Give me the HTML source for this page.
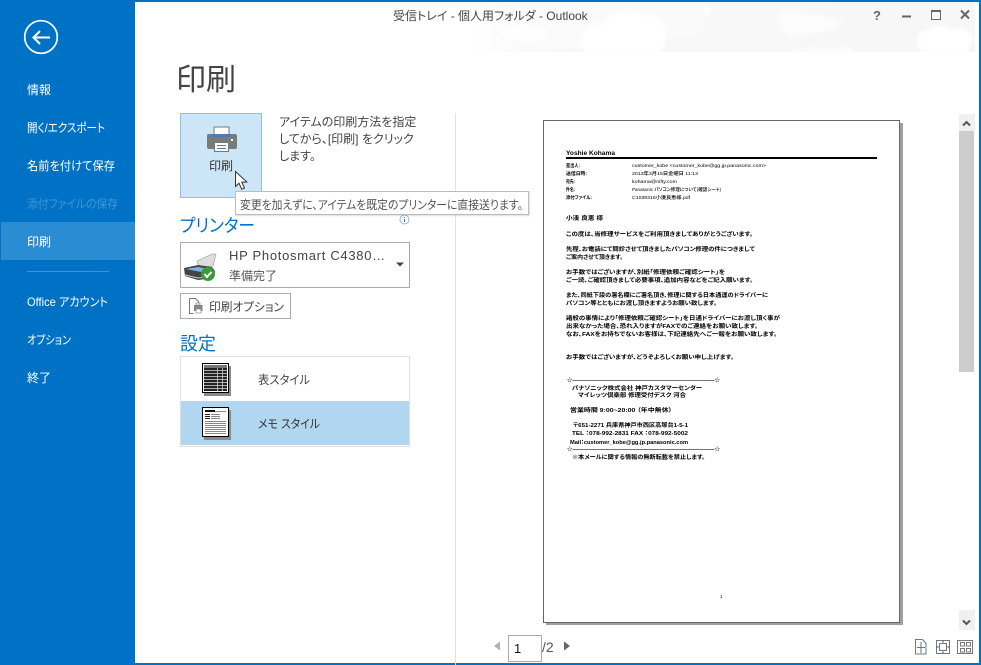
<!DOCTYPE html>
<html lang="ja"><head><meta charset="utf-8"><title>受信トレイ - 個人用フォルダ - Outlook</title>
<style>
html,body{margin:0;padding:0;width:981px;height:665px;overflow:hidden;background:#fff}
body{position:relative;font-family:"Liberation Sans","Noto Sans CJK JP",sans-serif;font-feature-settings:"palt";color:#444}
.a{position:absolute;white-space:nowrap}
svg{position:absolute;overflow:visible}
</style></head><body>

<!-- title-bar background -->
<svg style="left:0;top:0" width="981" height="665">
<defs>
<linearGradient id="g" x1="0" x2="1" y1="0" y2="0"><stop offset="0" stop-color="#f8f8f8" stop-opacity="0"/><stop offset=".2" stop-color="#f8f8f8"/><stop offset="1" stop-color="#f7f7f7"/></linearGradient>
<filter id="b"><feGaussianBlur stdDeviation="1.5"/></filter>
</defs>
<path d="M470 52 L600 48 L700 36 L712 8 L700 2 L975 2 L975 52 Z" fill="url(#g)"/>
<path d="M470 2H700L712 28L690 52H470Z" fill="url(#g)" opacity=".6"/>
<g fill="#fff" filter="url(#b)">
<path d="M585 52c-8-12-2-30 18-27 6-14 30-18 42-8 12-6 24 8 20 22 2 6-2 10-6 13z"/>
<path d="M500 34c8-10 24-10 30-8 12-2 20 4 18 12-10 6-34 6-48-4z" opacity=".7"/>
<path d="M918 46c-4-10 4-18 12-16 4-6 16-6 20 0 8-4 24 0 22 10-2 6-4 10-6 12h-42z"/>
<path d="M780 10c16 0 40 4 60 10 4 8-20 16-54 16-8-8-10-18-6-26z" opacity=".6"/>
<path d="M780 52c30-4 60-6 76-2v2z" opacity=".7"/>
</g>
</svg>

<!-- window frame -->
<div class="a" style="left:0;top:0;width:981px;height:2px;background:#0072c6"></div>
<div class="a" style="left:979px;top:0;width:2px;height:665px;background:#0072c6"></div>
<div class="a" style="left:0;top:663px;width:981px;height:2px;background:#0072c6"></div>

<!-- sidebar -->
<div class="a" style="left:0;top:0;width:135px;height:665px;background:#0072c6"></div>
<div class="a" style="left:1px;top:222px;width:134px;height:38px;background:#2a8dd4"></div>
<div class="a" style="left:27px;top:271px;width:82px;height:1px;background:#3f95d4"></div>
<svg style="left:0;top:0" width="135" height="400" font-family="Liberation Sans,Noto Sans CJK JP,sans-serif" font-size="12" fill="#fff">
<circle cx="41" cy="37" r="16.300" fill="none" stroke="#fff" stroke-width="1.700"/>
<path d="M33.500 37.500H50M40 31l-6.500 6.500L40 44" fill="none" stroke="#fff" stroke-width="2"/>
<text x="27" y="94" textLength="24" lengthAdjust="spacingAndGlyphs">情報</text>
<text x="27" y="132" textLength="78" lengthAdjust="spacingAndGlyphs">開く/エクスポート</text>
<text x="27" y="170" textLength="88" lengthAdjust="spacingAndGlyphs">名前を付けて保存</text>
<text x="27" y="208" textLength="91" lengthAdjust="spacingAndGlyphs" fill="#3f97d8">添付ファイルの保存</text>
<text x="27" y="246" textLength="24" lengthAdjust="spacingAndGlyphs">印刷</text>
<text x="27" y="306" textLength="81" lengthAdjust="spacingAndGlyphs">Office アカウント</text>
<text x="27" y="344" textLength="44" lengthAdjust="spacingAndGlyphs">オプション</text>
<text x="27" y="382" textLength="24" lengthAdjust="spacingAndGlyphs">終了</text>
</svg>

<!-- window title -->
<div class="a" style="left:393px;top:8px;font-size:12px;line-height:17px;color:#444">受信トレイ - 個人用フォルダ - Outlook</div>

<!-- caption buttons -->
<svg style="left:0;top:0" width="981" height="40">
<text x="873" y="20" font-family="Liberation Sans" font-weight="700" font-size="13" fill="#666">?</text>
<rect x="902" y="15.500" width="9" height="2" fill="#666"/>
<rect x="931.500" y="10.500" width="9" height="9" fill="none" stroke="#666"/><rect x="931" y="10" width="10" height="2" fill="#666"/>
<path d="M961 10.500l8 8M969 10.500l-8 8" stroke="#666" stroke-width="2"/>
</svg>

<!-- heading -->
<div class="a" style="left:176px;top:62px;font-size:30px;line-height:38px;color:#444">印刷</div>

<!-- print button -->
<div class="a" style="left:180px;top:113px;width:80px;height:83px;background:#cde6f7;border:1px solid #92c0e0"></div>
<svg style="left:0;top:0" width="300" height="200">
<rect x="214" y="127" width="15" height="9" fill="#fff" stroke="#777"/>
<path d="M209 134h26a2 2 0 0 1 2 2v11a2 2 0 0 1-2 2h-26a2 2 0 0 1-2-2v-11a2 2 0 0 1 2-2z" fill="#7a7a7a"/>
<rect x="211.500" y="134" width="20" height="3" fill="#4a7ebb"/>
<rect x="214.500" y="142.500" width="14" height="9" fill="#fff" stroke="#777"/>
<path d="M217 145.500h9M217 148.500h9" stroke="#4a7ebb"/>
<rect x="231" y="139" width="2" height="2" fill="#fff"/>
</svg>
<div class="a" style="left:209px;top:157px;font-size:12px;line-height:18px;color:#333">印刷</div>
<svg style="left:0;top:0" width="260" height="195">
<path d="M235.500 171.500v15l3.500-3.300 2.700 6 2.800-1.200-2.700-5.800 5 -.3z" fill="#fff" stroke="#333" stroke-width="1"/>
</svg>

<!-- description -->
<div class="a" style="left:279px;top:114px;font-size:12px;line-height:17px;color:#444">アイテムの印刷方法を指定<br>してから、[印刷] をクリック<br>します。</div>

<!-- divider -->
<div class="a" style="left:455px;top:113px;width:1px;height:552px;background:#e1e1e1"></div>

<!-- info icon + printer heading -->
<svg style="left:0;top:0" width="420" height="230">
<circle cx="404.500" cy="219.500" r="4.500" fill="#fff" stroke="#8fb8d8"/>
<path d="M404.500 217v1M404.500 219v3" stroke="#2a7fc0"/>
</svg>
<svg style="left:0;top:0" width="300" height="240" font-family="Liberation Sans,Noto Sans CJK JP,sans-serif">
<text x="180" y="232" font-size="18" fill="#0072c6" textLength="75" lengthAdjust="spacingAndGlyphs">プリンター</text>
</svg>

<!-- printer dropdown -->
<div class="a" style="left:180px;top:242px;width:228px;height:44px;border:1px solid #ababab;background:#fff"></div>
<svg style="left:0;top:0" width="420" height="300">
<path d="M197 261l15-7 4 0-3 12-14 1z" fill="#ddd" stroke="#999" stroke-width=".6"/>
<path d="M184 268l14-3 14 2 3 4-2 7-15 2-13-4z" fill="#444"/>
<path d="M186 269l12-2 11 2-8 3z" fill="#7fb2e0"/>
<path d="M185 275l13 3 15-2" stroke="#ccc" fill="none"/>
<circle cx="208" cy="274" r="7" fill="#3a9b3a"/>
<path d="M204.500 274l2.500 3 4.500-5" stroke="#fff" stroke-width="2" fill="none"/>
<path d="M396 262.500h8l-4 4z" fill="#444"/>
</svg>
<div class="a" style="left:229px;top:247px;font-size:13px;line-height:18px;color:#444;letter-spacing:.7px">HP Photosmart C4380…</div>
<div class="a" style="left:229px;top:267px;font-size:12px;line-height:18px;color:#555">準備完了</div>

<!-- print options -->
<div class="a" style="left:180px;top:293px;width:109px;height:24px;border:1px solid #ababab;background:#fff"></div>
<svg style="left:0;top:0" width="300" height="460" font-family="Liberation Sans,Noto Sans CJK JP,sans-serif" font-size="12">
<path d="M189.500 298.500h6l3 3v3M189.500 298.500v15h4" fill="none" stroke="#777"/>
<rect x="194" y="305" width="8.500" height="6" fill="#888"/><rect x="196" y="303" width="4" height="2" fill="#fff" stroke="#777" stroke-width=".6"/><rect x="196" y="309" width="5" height="4" fill="#fff" stroke="#777" stroke-width=".6"/>
<text x="209" y="311" fill="#444" textLength="75" lengthAdjust="spacingAndGlyphs">印刷オプション</text>
</svg>

<!-- settings -->
<div class="a" style="left:180px;top:331px;font-size:18px;line-height:26px;color:#0072c6">設定</div>
<div class="a" style="left:180px;top:356px;width:228px;height:89px;border:1px solid #e1e1e1;background:#fff"></div>
<div class="a" style="left:181px;top:401px;width:228px;height:44px;background:#b1d6f0"></div>
<svg style="left:0;top:0" width="340" height="450" font-family="Liberation Sans,Noto Sans CJK JP,sans-serif" font-size="12">
<rect x="204" y="366" width="27" height="30" fill="#8a8a8a"/>
<rect x="202.500" y="363.500" width="26" height="29" fill="#fff" stroke="#000"/>
<rect x="204" y="365" width="23" height="3" fill="#777"/>
<rect x="204" y="368" width="23" height="23" fill="#222"/>
<path d="M204 370.500h23M204 373.500h23M204 376.500h23M204 379.500h23M204 382.500h23M204 385.500h23M204 388.500h23M217.500 368v23M222.500 368v23" stroke="#ddd" stroke-width=".7"/>
<rect x="204" y="410" width="27" height="30" fill="#8a8a8a"/>
<rect x="202.500" y="407.500" width="26" height="29" fill="#fff" stroke="#000"/>
<rect x="205" y="410" width="10" height="2" fill="#111"/><rect x="215" y="411" width="11" height="1" fill="#888"/>
<rect x="205" y="414" width="5" height="1" fill="#222"/><rect x="205" y="416" width="5" height="1" fill="#222"/><rect x="205" y="418" width="5" height="1" fill="#222"/>
<path d="M211 414.500h9M211 416.500h9M211 418.500h9M205 421.500h21M205 423.500h21M205 425.500h21M205 427.500h21M205 429.500h21M205 431.500h21M205 433.500h21" stroke="#888"/>
<text x="258" y="384" fill="#444" textLength="52" lengthAdjust="spacingAndGlyphs">表スタイル</text>
<text x="258" y="428" fill="#333" textLength="62" lengthAdjust="spacingAndGlyphs">メモ スタイル</text>
</svg>

<!-- tooltip -->
<div class="a" style="left:235px;top:191px;width:292px;height:22px;background:#fff;border:1px solid #bcbcbc;box-shadow:1px 1px 1px rgba(0,0,0,.12)"></div>
<svg style="left:0;top:0" width="540" height="220" font-family="Liberation Sans,Noto Sans CJK JP,sans-serif" font-size="12">
<text x="240" y="209" fill="#555" textLength="283" lengthAdjust="spacingAndGlyphs">変更を加えずに、アイテムを既定のプリンターに直接送ります。</text>
</svg>

<!-- page preview -->
<div class="a" style="left:546px;top:123px;width:357px;height:502px;background:#a0a0a0"></div>
<div class="a" style="left:543px;top:120px;width:355px;height:501px;background:#fff;border:1px solid #666"></div>
<svg style="left:0;top:0" width="981" height="665" font-family="Liberation Sans,Noto Sans CJK JP,sans-serif" font-size="5.800" fill="#000">
<text x="566" y="155" font-weight="700" font-size="6.500" textLength="49" lengthAdjust="spacingAndGlyphs">Yoshie Kohama</text>
<rect x="566" y="157" width="311" height="2" fill="#000"/>
<g font-size="4.800" font-weight="700">
<text x="566" y="167" textLength="14" lengthAdjust="spacingAndGlyphs">差出人:</text>
<text x="566" y="175" textLength="21" lengthAdjust="spacingAndGlyphs">送信日時:</text>
<text x="566" y="183" textLength="9" lengthAdjust="spacingAndGlyphs">宛先:</text>
<text x="566" y="191" textLength="9" lengthAdjust="spacingAndGlyphs">件名:</text>
<text x="566" y="199" textLength="26" lengthAdjust="spacingAndGlyphs">添付ファイル:</text>
</g>
<g font-size="4.800" font-weight="500">
<text x="632" y="167" textLength="134" lengthAdjust="spacingAndGlyphs">customer_kobe &lt;customer_kobe@gg.jp.panasonic.com&gt;</text>
<text x="632" y="175" textLength="66" lengthAdjust="spacingAndGlyphs">2013年3月15日金曜日 11:13</text>
<text x="632" y="183" textLength="45" lengthAdjust="spacingAndGlyphs">kohama@nifty.com</text>
<text x="632" y="191" textLength="89" lengthAdjust="spacingAndGlyphs">Panasonic パソコン修理について(確認シート)</text>
<text x="632" y="199" textLength="58" lengthAdjust="spacingAndGlyphs">C1039316小湊良恵様.pdf</text>
</g>
<g font-weight="700">
<text x="566" y="220" textLength="37" lengthAdjust="spacingAndGlyphs">小湊 良恵 様</text>
<text x="566" y="236" textLength="187" lengthAdjust="spacingAndGlyphs">この度は、当修理サービスをご利用頂きましてありがとうございます。</text>
<text x="566" y="251" textLength="189" lengthAdjust="spacingAndGlyphs">先程、お電話にて問診させて頂きましたパソコン修理の件につきまして</text>
<text x="566" y="259" textLength="57" lengthAdjust="spacingAndGlyphs">ご案内させて頂きます。</text>
<text x="566" y="274" textLength="159" lengthAdjust="spacingAndGlyphs">お手数ではございますが、別紙「修理依頼ご確認シート」を</text>
<text x="566" y="282" textLength="187" lengthAdjust="spacingAndGlyphs">ご一読、ご確認頂きまして必要事項、追加内容などをご記入願います。</text>
<text x="566" y="297" textLength="202" lengthAdjust="spacingAndGlyphs">また、同紙下段の署名欄にご署名頂き、修理に関する日本通運のドライバーに</text>
<text x="566" y="305" textLength="151" lengthAdjust="spacingAndGlyphs">パソコン等とともにお渡し頂きますようお願い致します。</text>
<text x="566" y="320" textLength="214" lengthAdjust="spacingAndGlyphs">諸般の事情により「修理依頼ご確認シート」を日通ドライバーにお渡し頂く事が</text>
<text x="566" y="328" textLength="192" lengthAdjust="spacingAndGlyphs">出来なかった場合、恐れ入りますがFAXでのご連絡をお願い致します。</text>
<text x="566" y="336" textLength="211" lengthAdjust="spacingAndGlyphs">なお、FAXをお持ちでないお客様は、下記連絡先へご一報をお願い致します。</text>
<text x="566" y="359" textLength="168" lengthAdjust="spacingAndGlyphs">お手数ではございますが、どうぞよろしくお願い申し上げます。</text>
<text x="567" y="382" textLength="153" lengthAdjust="spacingAndGlyphs">☆――――――――――――――――――――――――――☆</text>
<text x="572" y="390" textLength="130" lengthAdjust="spacingAndGlyphs">パナソニック株式会社 神戸カスタマーセンター</text>
<text x="578" y="397" textLength="108" lengthAdjust="spacingAndGlyphs">マイレッツ倶楽部 修理受付デスク 河合</text>
<text x="570" y="412" textLength="102" lengthAdjust="spacingAndGlyphs">営業時間 9:00~20:00 （年中無休）</text>
<text x="573" y="427" textLength="115" lengthAdjust="spacingAndGlyphs">〒651-2271 兵庫県神戸市西区高塚台1-5-1</text>
<text x="572" y="435" textLength="116" lengthAdjust="spacingAndGlyphs">TEL ：078-992-2831 FAX ：078-992-5002</text>
<text x="570" y="444" textLength="118" lengthAdjust="spacingAndGlyphs">Mail：customer_kobe@gg.jp.panasonic.com</text>
<text x="567" y="451" textLength="153" lengthAdjust="spacingAndGlyphs">☆――――――――――――――――――――――――――☆</text>
<text x="572" y="459" textLength="133" lengthAdjust="spacingAndGlyphs">※本メールに関する情報の無断転載を禁止します。</text>
</g>
<text x="720" y="598" font-size="4.500">1</text>
</svg>

<!-- scrollbar -->
<div class="a" style="left:959px;top:114px;width:16px;height:17px;background:#f0f0f0"></div>
<div class="a" style="left:959px;top:131px;width:15px;height:241px;background:#cdcdcd"></div>
<div class="a" style="left:959px;top:610px;width:16px;height:20px;background:#f0f0f0"></div>
<svg style="left:0;top:0" width="981" height="665">
<path d="M963 125.500l3.500-3.500 3.500 3.500" fill="none" stroke="#555" stroke-width="2"/>
<path d="M963 620.500l3.500 3.500 3.500-3.500" fill="none" stroke="#555" stroke-width="2"/>
<!-- pager arrows -->
<path d="M500 641.500v9l-6-4.500z" fill="#b0b0b0"/>
<path d="M564 641.500v9l6-4.500z" fill="#666"/>
<!-- view icons -->
<g fill="none">
<path d="M915.500 639.500h7l3.500 4v10.500h-10.500z" stroke="#777"/>
<path d="M921 642v11M917 647.500h8" stroke="#3f7fbf"/>
<rect x="936.500" y="640.500" width="13" height="13" stroke="#777"/>
<rect x="939.500" y="643.500" width="7" height="7" stroke="#777"/>
<path d="M943 641v1.500M943 651.500v1.500M937 647h1.500M947.500 647h1.500" stroke="#3f7fbf" stroke-width="1.500"/>
<rect x="957.500" y="640.500" width="15" height="13" stroke="#777"/>
<rect x="960.500" y="642.500" width="4" height="3.500" stroke="#777"/>
<rect x="966.500" y="642.500" width="4" height="3.500" stroke="#777"/>
<rect x="960.500" y="648.500" width="4" height="3.500" stroke="#777"/>
<rect x="966.500" y="648.500" width="4" height="3.500" stroke="#777"/>
</g>
</svg>
<div class="a" style="left:508px;top:635px;width:32px;height:25px;border:1px solid #ababab;background:#fff"></div>
<div class="a" style="left:514px;top:640px;font-size:13px;line-height:18px;color:#111">1</div>
<div class="a" style="left:542px;top:638px;font-size:14px;line-height:18px;color:#555">/2</div>

</body></html>
